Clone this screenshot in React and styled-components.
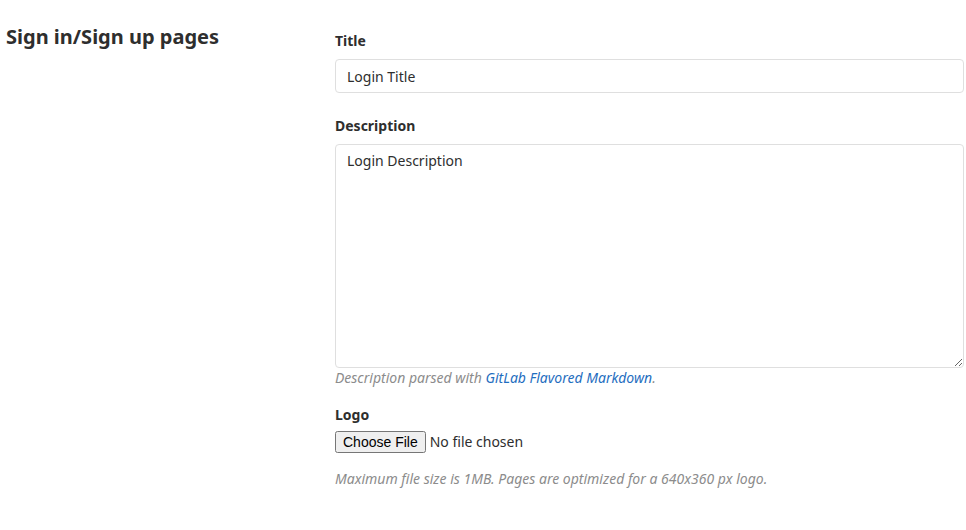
import React from "react";
import styled, { createGlobalStyle } from "styled-components";

const GlobalStyle = createGlobalStyle`
  body {
    margin: 0;
    background: #fff;
    font-family: "Noto Sans", "Open Sans", sans-serif;
    color: #2e2e2e;
  }
`;

const Section = styled.div`
  display: grid;
  grid-template-columns: 335px 1fr;
  padding-right: 2px;
`;

const Heading = styled.h4`
  margin: 0;
  padding: 25px 0 0 6px;
  font-size: 20px;
  line-height: 24px;
  font-weight: 700;
  color: #2e2e2e;
`;

const Form = styled.div`
  padding-top: 31px;
  display: flex;
  flex-direction: column;
`;

const Group = styled.div`
  display: flex;
  flex-direction: column;
  margin-bottom: ${props => props.gap || 23}px;
`;

const Label = styled.label`
  font-size: 14px;
  line-height: 20px;
  font-weight: 700;
  margin-bottom: ${props => props.gap || 8}px;
`;

const Input = styled.input`
  box-sizing: border-box;
  height: 34px;
  padding: 6px 11px;
  font: inherit;
  font-size: 14px;
  color: #2e2e2e;
  border: 1px solid #dfdfdf;
  border-radius: 4px;
  outline: none;
`;

const TextArea = styled.textarea`
  box-sizing: border-box;
  height: 224px;
  padding: 6px 11px;
  font: inherit;
  font-size: 14px;
  line-height: 20px;
  color: #2e2e2e;
  border: 1px solid #dfdfdf;
  border-radius: 4px;
  outline: none;
`;

const Help = styled.p`
  margin: ${props => props.top || 0}px 0 0;
  font-size: 14px;
  line-height: 20px;
  font-style: italic;
  color: #8c8c8c;

  a {
    color: #1f6ec0;
    text-decoration: none;
  }
`;

const FileRow = styled.div`
  display: flex;
`;

const FileInput = styled.input`
  font-family: "Noto Sans", "Open Sans", sans-serif;
  font-size: 14px;
  color: #2e2e2e;
`;

export default function App() {
  return (
    <>
      <GlobalStyle />
      <Section>
        <Heading>Sign in/Sign up pages</Heading>
        <Form>
          <Group>
            <Label>Title</Label>
            <Input defaultValue="Login Title" />
          </Group>
          <Group gap={17}>
            <Label>Description</Label>
            <TextArea defaultValue="Login Description" />
            <Help>
              Description parsed with <a href="#">GitLab Flavored Markdown</a>.
            </Help>
          </Group>
          <Group>
            <Label gap={6}>Logo</Label>
            <FileRow>
              <FileInput type="file" />
            </FileRow>
            <Help top={16}>
              Maximum file size is 1MB. Pages are optimized for a 640x360 px logo.
            </Help>
          </Group>
        </Form>
      </Section>
    </>
  );
}
